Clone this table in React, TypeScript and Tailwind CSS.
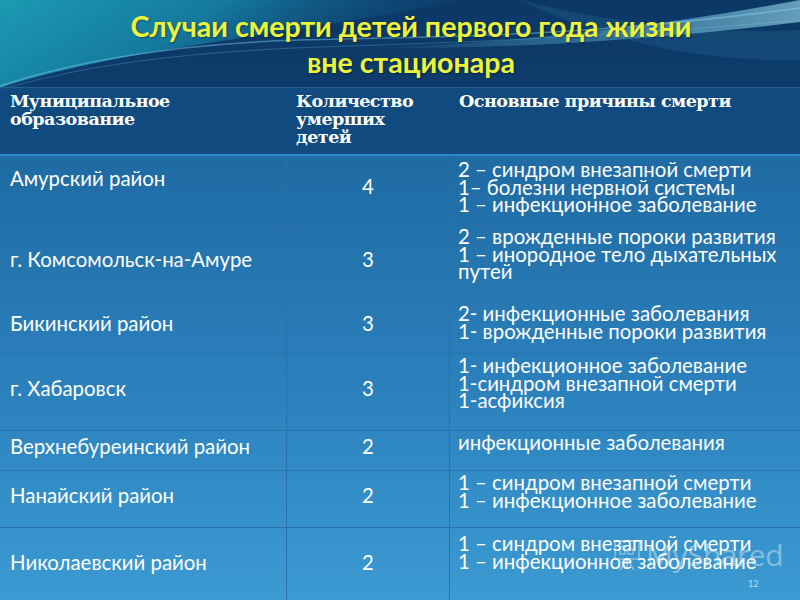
import React from "react";

interface IRow {
   name: string;
   count: string;
   causes: string[];
   height: string;
   nameClass?: string;
   causeClass?: string;
}

const rows: IRow[] = [
   {
      name: "Амурский район",
      count: "4",
      causes: [
         "2 – синдром внезапной смерти",
         "1– болезни нервной системы",
         "1 – инфекционное заболевание",
      ],
      height: "h-[69px]",
      nameClass: "self-start pt-[14px]",
      causeClass: "pt-[5px]",
   },
   {
      name: "г. Комсомольск-на-Амуре",
      count: "3",
      causes: [
         "2 – врожденные пороки развития",
         "1 – инородное тело дыхательных путей",
      ],
      height: "h-[77px]",
   },
   {
      name: "Бикинский район",
      count: "3",
      causes: ["2- инфекционные заболевания", "1- врожденные пороки развития"],
      height: "h-[52px]",
   },
   {
      name: "г. Хабаровск",
      count: "3",
      causes: [
         "1- инфекционное заболевание",
         "1-синдром внезапной смерти",
         "1-асфиксия",
      ],
      height: "h-[77px]",
   },
   {
      name: "Верхнебуреинский район",
      count: "2",
      causes: ["инфекционные заболевания"],
      height: "h-[40px]",
   },
   {
      name: "Нанайский район",
      count: "2",
      causes: ["1 – синдром внезапной смерти", "1 – инфекционное заболевание"],
      height: "h-[57px]",
   },
   {
      name: "Николаевский район",
      count: "2",
      causes: ["1 – синдром внезапной смерти", "1 – инфекционное заболевание"],
      height: "h-[78px]",
      causeClass: "pt-[7px]",
   },
];

const Background: React.FC = () => (
   <svg
      className="absolute inset-0 w-[800px] h-[600px]"
      viewBox="0 0 800 600"
      preserveAspectRatio="none"
   >
      <defs>
         <linearGradient id="teal" x1="0" y1="0" x2="1" y2="0.3">
            <stop offset="0" stopColor="#1c9ab2" />
            <stop offset="0.45" stopColor="#157a9f" />
            <stop offset="1" stopColor="#0f4f7e" stopOpacity="0" />
         </linearGradient>
         <linearGradient id="streak" x1="0" y1="0" x2="1" y2="0">
            <stop offset="0" stopColor="#6fc9e6" stopOpacity="0" />
            <stop offset="0.5" stopColor="#6fc9e6" stopOpacity="0.35" />
            <stop offset="1" stopColor="#9fe0f2" stopOpacity="0.6" />
         </linearGradient>
      </defs>
      {/* teal sweep top-left */}
      <path d="M0 0 L460 0 C360 22 220 40 130 56 C80 66 35 76 0 88 Z" fill="url(#teal)" />
      <path d="M0 86 C60 66 160 44 300 40 C420 36 560 40 800 8" fill="none" stroke="#7fd3ea" strokeOpacity="0.45" strokeWidth="1.5" />
      <path d="M0 90 C80 66 180 52 320 47 C480 42 620 36 800 20" fill="none" stroke="#7fd3ea" strokeOpacity="0.25" strokeWidth="1" />
      {/* upper right wave */}
      <path d="M360 48 C500 44 640 30 800 0 L800 22 C650 40 500 50 360 48 Z" fill="url(#streak)" />
      <path d="M520 0 C600 20 700 36 800 30 L800 60 C700 62 600 40 520 0 Z" fill="#4fb2d8" fillOpacity="0.12" />
   </svg>
);

export default function App() {
   return (
      <div className="relative w-[800px] h-[600px] overflow-hidden bg-gradient-to-b from-[#0c3866] via-[#0f4577] to-[#1a5c93]">
         <Background />

         <div className="relative flex flex-col h-full">
            {/* Title */}
            <div className="h-[87px] shrink-0 flex flex-col items-center pl-[22px] pt-[8px] font-['Lato','Noto_Sans',sans-serif] font-bold text-[#eef43c] text-[28.6px] leading-[36px] [text-shadow:1px_1px_2px_rgba(0,0,0,0.35)]">
               <div>Случаи смерти детей первого года жизни</div>
               <div>вне стационара</div>
            </div>

            {/* Table */}
            <div className="flex flex-col">
               {/* Header */}
               <div className="grid grid-cols-[287px_163px_1fr] h-[69px] shrink-0 bg-[#13548a]/60 border-t border-[#2f6fa3]/60 border-b-[2px] border-b-[#2b8ad0] text-white font-['DejaVu_Serif','Liberation_Serif',serif] font-bold text-[17.5px] leading-[18px] tracking-[-0.5px]">
                  <div className="pl-[10px] pt-[4px]">
                     Муниципальное
                     <br />
                     образование
                  </div>
                  <div className="pl-[9px] pt-[4px]">
                     Количество
                     <br />
                     умерших
                     <br />
                     детей
                  </div>
                  <div className="pl-[9px] pt-[4px]">Основные причины смерти</div>
               </div>

               {/* Body */}
               <div className="bg-gradient-to-b from-[#1f6ba4] via-[#2b80bb] to-[#3c9bd2] text-white font-['Lato','Noto_Sans',sans-serif] text-[20.4px] leading-[17.5px]">
                  {rows.map((row, i) => (
                     <div
                        key={i}
                        className={`grid grid-cols-[287px_163px_1fr] shrink-0 border-b border-[#2a70ab] ${row.height}`}
                     >
                        <div className={`flex items-center pl-[10px] pb-[7px] border-r border-[#2a70ab] ${row.nameClass ?? ""}`}>
                           {row.name}
                        </div>
                        <div className="flex items-center justify-center pb-[7px] border-r border-[#2a70ab]">
                           {row.count}
                        </div>
                        <div className={`pl-[8px] pr-[10px] ${row.causeClass ?? "pt-[3px]"}`}>
                           {row.causes.map((c, j) => (
                              <div key={j}>{c}</div>
                           ))}
                        </div>
                     </div>
                  ))}
               </div>
            </div>
         </div>

         {/* Watermark */}
         <div className="absolute left-[612px] top-[538px] flex items-center gap-[4px] text-white/40 font-['Open_Sans',sans-serif] text-[30px] leading-none">
            <svg width="30" height="34" viewBox="0 0 30 34" fill="none" stroke="currentColor" strokeWidth="1.5">
               <rect x="3" y="3" width="24" height="18" />
               <line x1="1" y1="3" x2="29" y2="3" />
               <rect x="8" y="8" width="5" height="8" />
               <rect x="16" y="11" width="5" height="5" />
               <line x1="15" y1="21" x2="8" y2="32" />
               <line x1="15" y1="21" x2="22" y2="32" />
               <line x1="15" y1="21" x2="15" y2="30" />
            </svg>
            <span className="tracking-[-0.5px]">MyShared</span>
         </div>
         <div className="absolute left-[748px] top-[577px] text-[9px] text-white/70 font-['Lato',sans-serif]">
            12
         </div>
      </div>
   );
}
